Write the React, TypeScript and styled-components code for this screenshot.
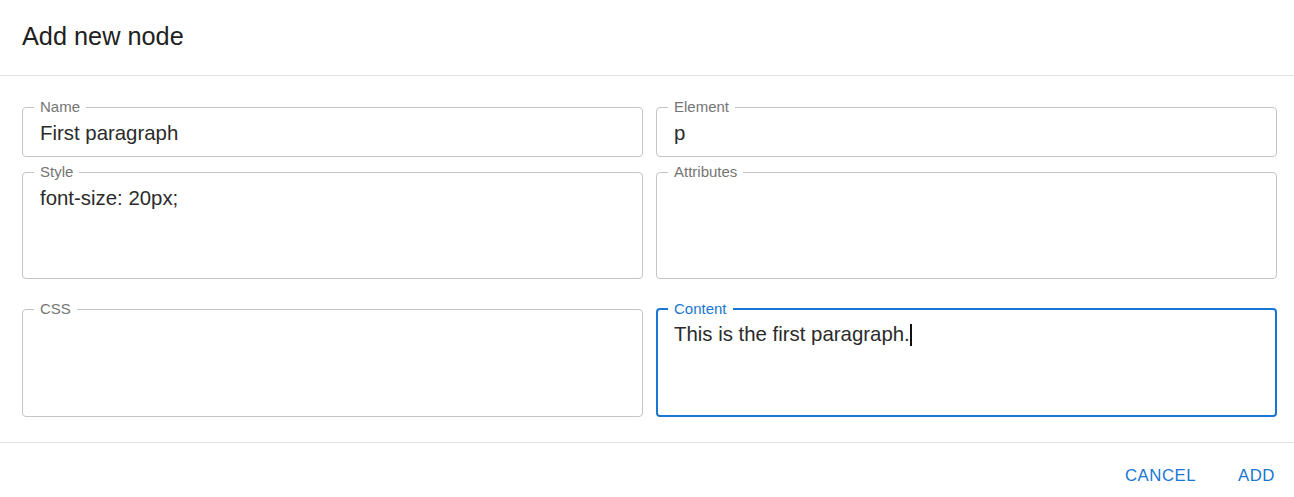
import React from "react";
import styled, { createGlobalStyle } from "styled-components";

const Global = createGlobalStyle`
  html, body { margin: 0; padding: 0; background: #fff; }
  body { font-family: "Liberation Sans", Arial, sans-serif; color: #212121; }
  * { box-sizing: border-box; }
`;

const Dialog = styled.div`
  width: 1294px;
  height: 497px;
  display: flex;
  flex-direction: column;
  background: #fff;
`;

const Header = styled.div`
  height: 76px;
  display: flex;
  align-items: center;
  padding: 0 22px 3px 22px;
  border-bottom: 1px solid #e0e0e0;
`;

const Title = styled.h2`
  margin: 0;
  font-size: 25.3px;
  font-weight: 400;
  line-height: 30px;
  color: #212121;
`;

const Body = styled.div`
  display: flex;
  flex-direction: column;
  padding: 24px 17px 25px 22px;
  border-bottom: 1px solid #e0e0e0;
`;

const Row = styled.div<{ $top: number }>`
  display: grid;
  grid-template-columns: 1fr 1fr;
  column-gap: 13px;
  margin-top: ${(p) => p.$top}px;
`;

const Field = styled.fieldset<{ $focused?: boolean }>`
  margin: 0;
  min-width: 0;
  border: ${(p) => (p.$focused ? "2px solid #1976d2" : "1px solid #c4c4c4")};
  border-radius: 4px;
  padding: 0 ${(p) => (p.$focused ? 10 : 11)}px;
`;

const Legend = styled.legend<{ $focused?: boolean }>`
  padding: 0 6px;
  font-size: 15px;
  line-height: 14px;
  color: ${(p) => (p.$focused ? "#1976d2" : "#757575")};
`;

const Value = styled.div<{ $height: number; $focused?: boolean }>`
  padding: ${(p) => (p.$focused ? "7px 6px 10px" : "8px 6px 11px")};
  font-size: 20.4px;
  line-height: 23px;
  color: #2b2b2b;
  height: ${(p) => p.$height - (p.$focused ? 2 : 0)}px;
  white-space: pre-wrap;
`;

const Caret = styled.span`
  display: inline-block;
  width: 2px;
  height: 22px;
  background: #111;
  vertical-align: -5px;
`;

const Footer = styled.div`
  flex: 1;
  display: flex;
  justify-content: flex-end;
  align-items: flex-start;
  gap: 22px;
  padding: 11px 9px 0 0;
`;

const Button = styled.button`
  height: 43px;
  padding: 0 10px;
  border: 0;
  background: transparent;
  font-family: "Liberation Sans", Arial, sans-serif;
  font-size: 16.8px;
  letter-spacing: 0.5px;
  color: #1976d2;
  text-transform: uppercase;
  cursor: pointer;
`;

type FieldProps = {
  label: string;
  value?: string;
  height: number;
  focused?: boolean;
};

function TextField({ label, value = "", height, focused }: FieldProps) {
  return (
    <Field $focused={focused}>
      <Legend $focused={focused}>{label}</Legend>
      <Value $height={height} $focused={focused}>
        {value}
        {focused && <Caret />}
      </Value>
    </Field>
  );
}

export default function App() {
  return (
    <>
      <Global />
      <Dialog>
        <Header>
          <Title>Add new node</Title>
        </Header>
        <Body>
          <Row $top={0}>
            <TextField label="Name" value="First paragraph" height={42} />
            <TextField label="Element" value="p" height={42} />
          </Row>
          <Row $top={8}>
            <TextField label="Style" value="font-size: 20px;" height={99} />
            <TextField label="Attributes" height={99} />
          </Row>
          <Row $top={23}>
            <TextField label="CSS" height={100} />
            <TextField label="Content" value="This is the first paragraph." height={100} focused />
          </Row>
        </Body>
        <Footer>
          <Button>Cancel</Button>
          <Button>Add</Button>
        </Footer>
      </Dialog>
    </>
  );
}
